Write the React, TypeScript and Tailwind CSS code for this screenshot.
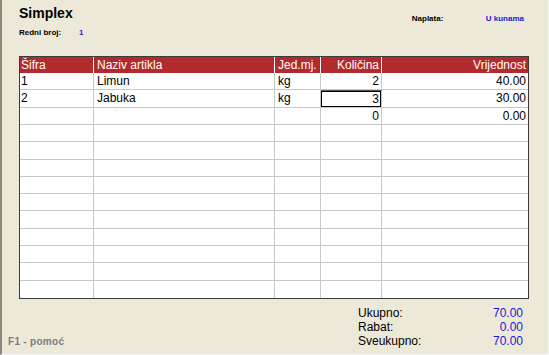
const columns = [
  { label: "Šifra", align: "left" },
  { label: "Naziv artikla", align: "left" },
  { label: "Jed.mj.", align: "left" },
  { label: "Količina", align: "right" },
  { label: "Vrijednost", align: "right" },
];

const rows: string[][] = [
  ["1", "Limun", "kg", "2", "40.00"],
  ["2", "Jabuka", "kg", "3", "30.00"],
  ["", "", "", "0", "0.00"],
  ...Array.from({ length: 10 }, () => ["", "", "", "", ""]),
];

const totals = [
  { label: "Ukupno:", value: "70.00" },
  { label: "Rabat:", value: "0.00" },
  { label: "Sveukupno:", value: "70.00" },
];

export default function App() {
  return (
    <div className="w-[549px] h-[355px] bg-[#ECE9D8] border-l-2 border-l-[#8c8a7e] border-r border-r-[#f7f6f0] border-b border-b-[#f7f6f0] flex flex-col pl-[17px] pr-[19px] font-['Liberation_Sans',Arial,sans-serif] text-black">
      {/* header */}
      <div className="flex justify-between h-[26px] pt-[5px]">
        <div className="text-[14px] font-bold leading-[17px]">Simplex</div>
        <div className="flex pt-[9px] pr-[5px] text-[8px] font-bold leading-[10px]">
          <span className="w-[74px]">Naplata:</span>
          <span className="text-[#1a1ad0]">U kunama</span>
        </div>
      </div>
      <div className="flex h-[30px] pt-[2px] text-[8px] font-bold leading-[10px]">
        <span className="w-[60px]">Redni broj:</span>
        <span className="text-[#1a1ad0]">1</span>
      </div>

      {/* table */}
      <div className="w-[510px] h-[243px] border border-[#3c3c3c] bg-white grid grid-cols-[74px_181px_46px_61px_1fr] grid-rows-[16px_repeat(13,1fr)] text-[12px] leading-none">
        {columns.map((c, i) => (
          <div
            key={c.label}
            className={`bg-[#B22A2D] text-white flex items-center ${
              i < columns.length - 1 ? "border-r border-r-white" : ""
            } ${c.align === "right" ? "justify-end pr-[2px]" : i === 0 ? "pl-[1px]" : "pl-[3px]"}`}
          >
            {c.label}
          </div>
        ))}
        {rows.map((row, r) =>
          row.map((cell, i) => {
            const selected = r === 1 && i === 3;
            return (
              <div
                key={`${r}-${i}`}
                className={`flex items-center border-b border-b-[#c8c8c8] ${
                  i < row.length - 1 ? "border-r border-r-[#c8c8c8]" : ""
                } ${
                  columns[i].align === "right"
                    ? "justify-end pr-[2px]"
                    : i === 0
                    ? "pl-[1px]"
                    : "pl-[3px]"
                } ${selected ? "ring-1 ring-inset ring-black border-t border-t-[#555]" : ""} ${
                  r === rows.length - 1 ? "border-b-0" : ""
                }`}
              >
                {cell}
              </div>
            );
          })
        )}
      </div>

      {/* footer */}
      <div className="flex justify-between flex-1">
        <div className="self-end -ml-[11px] pb-[5px] text-[10px] font-bold text-[#7c7c7c] tracking-[0.3px]">
          F1 - pomoć
        </div>
        <div className="w-[165px] mr-[6px] pt-[7px] text-[12px] leading-[14px]">
          {totals.map((t) => (
            <div key={t.label} className="flex justify-between">
              <span>{t.label}</span>
              <span className="text-[#1a1ad0]">{t.value}</span>
            </div>
          ))}
        </div>
      </div>
    </div>
  );
}
